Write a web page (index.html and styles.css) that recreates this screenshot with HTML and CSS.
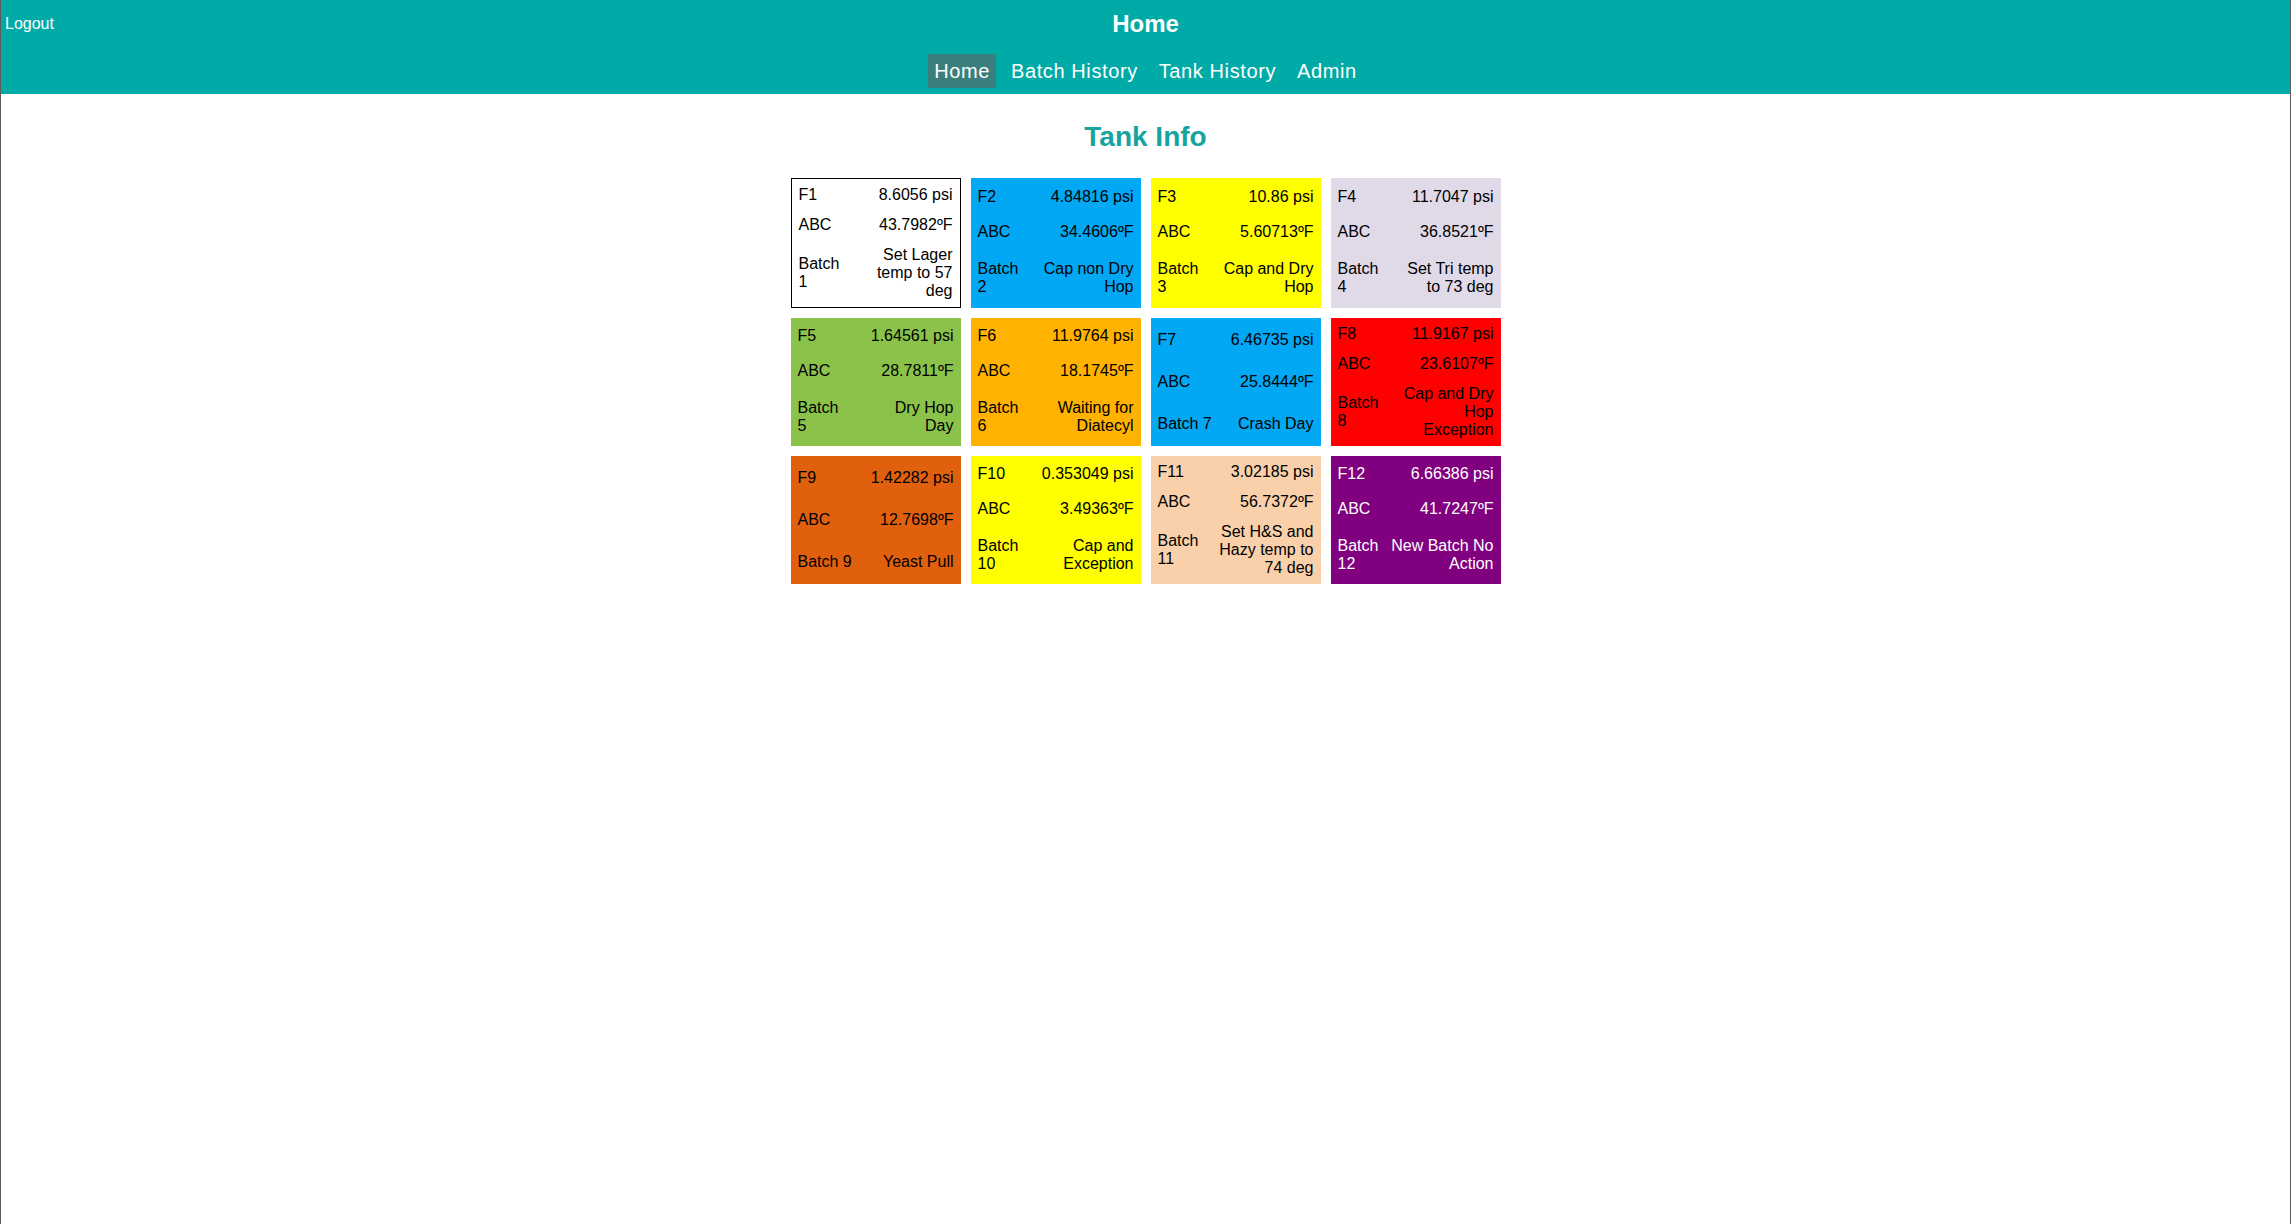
FILE: index.html
```html
<!DOCTYPE html>
<html lang="en">
<head>
<meta charset="utf-8">
<title>Home</title>
<link rel="stylesheet" href="styles.css">
</head>
<body>
<div class="page">
  <header class="topbar">
    <a class="logout" href="#">Logout</a>
    <div class="page-title">Home</div>
    <nav class="nav">
      <a class="nav-item active" href="#">Home</a>
      <a class="nav-item" href="#">Batch History</a>
      <a class="nav-item" href="#">Tank History</a>
      <a class="nav-item" href="#">Admin</a>
    </nav>
  </header>
  <main class="content">
    <h1 class="section-title">Tank Info</h1>
    <div class="tanks">
      <div class="tank t-white"><table class="tank-table"><tr><td>F1</td><td class="val">8.6056 psi</td></tr><tr><td>ABC</td><td class="val">43.7982ºF</td></tr><tr><td>Batch 1</td><td class="val">Set Lager temp to 57 deg</td></tr></table></div>
      <div class="tank t-blue"><table class="tank-table"><tr><td>F2</td><td class="val">4.84816 psi</td></tr><tr><td>ABC</td><td class="val">34.4606ºF</td></tr><tr><td>Batch 2</td><td class="val">Cap non Dry Hop</td></tr></table></div>
      <div class="tank t-yellow"><table class="tank-table"><tr><td>F3</td><td class="val">10.86 psi</td></tr><tr><td>ABC</td><td class="val">5.60713ºF</td></tr><tr><td>Batch 3</td><td class="val">Cap and Dry Hop</td></tr></table></div>
      <div class="tank t-lavender"><table class="tank-table"><tr><td>F4</td><td class="val">11.7047 psi</td></tr><tr><td>ABC</td><td class="val">36.8521ºF</td></tr><tr><td>Batch 4</td><td class="val">Set Tri temp to 73 deg</td></tr></table></div>

      <div class="tank t-green"><table class="tank-table"><tr><td>F5</td><td class="val">1.64561 psi</td></tr><tr><td>ABC</td><td class="val">28.7811ºF</td></tr><tr><td>Batch 5</td><td class="val">Dry Hop Day</td></tr></table></div>
      <div class="tank t-amber"><table class="tank-table"><tr><td>F6</td><td class="val">11.9764 psi</td></tr><tr><td>ABC</td><td class="val">18.1745ºF</td></tr><tr><td>Batch 6</td><td class="val">Waiting for Diatecyl</td></tr></table></div>
      <div class="tank t-blue"><table class="tank-table"><tr><td>F7</td><td class="val">6.46735 psi</td></tr><tr><td>ABC</td><td class="val">25.8444ºF</td></tr><tr><td>Batch 7</td><td class="val">Crash Day</td></tr></table></div>
      <div class="tank t-red"><table class="tank-table"><tr><td>F8</td><td class="val">11.9167 psi</td></tr><tr><td>ABC</td><td class="val">23.6107ºF</td></tr><tr><td>Batch 8</td><td class="val">Cap and Dry Hop Exception</td></tr></table></div>

      <div class="tank t-orange"><table class="tank-table"><tr><td>F9</td><td class="val">1.42282 psi</td></tr><tr><td>ABC</td><td class="val">12.7698ºF</td></tr><tr><td>Batch 9</td><td class="val">Yeast Pull</td></tr></table></div>
      <div class="tank t-yellow"><table class="tank-table"><tr><td>F10</td><td class="val">0.353049 psi</td></tr><tr><td>ABC</td><td class="val">3.49363ºF</td></tr><tr><td>Batch 10</td><td class="val">Cap and Exception</td></tr></table></div>
      <div class="tank t-peach"><table class="tank-table"><tr><td>F11</td><td class="val">3.02185 psi</td></tr><tr><td>ABC</td><td class="val">56.7372ºF</td></tr><tr><td>Batch 11</td><td class="val">Set H&amp;S and Hazy temp to 74 deg</td></tr></table></div>
      <div class="tank t-purple"><table class="tank-table"><tr><td>F12</td><td class="val val-wide">6.66386 psi</td></tr><tr><td>ABC</td><td class="val">41.7247ºF</td></tr><tr><td>Batch 12</td><td class="val">New Batch No Action</td></tr></table></div>
    </div>
  </main>
</div>
</body>
</html>
```

FILE: styles.css
```css
html, body {
  margin: 0;
  padding: 0;
  background: #ffffff;
}

body {
  font-family: "Liberation Sans", Arial, sans-serif;
  font-size: 16px;
  color: #000;
}

.page {
  min-height: 100vh;
  box-sizing: border-box;
  border-left: 1px solid #5c5c5c;
  border-right: 1px solid #5c5c5c;
}

.topbar {
  background: #00aaa6;
  display: grid;
  grid-template-columns: 1fr auto 1fr;
  grid-template-rows: auto auto;
  padding: 10px 0 6px;
}

.logout {
  grid-column: 1;
  grid-row: 1;
  justify-self: start;
  align-self: start;
  margin-top: 5px;
  padding-left: 4px;
  color: #ffffff;
  text-decoration: none;
  font-size: 16px;
  line-height: 18px;
}

.page-title {
  grid-column: 2;
  grid-row: 1;
  color: #ffffff;
  font-weight: bold;
  font-size: 24px;
  line-height: 28px;
  text-align: center;
}

.nav {
  grid-column: 1 / 4;
  grid-row: 2;
  display: flex;
  justify-content: center;
  gap: 9px;
  margin-top: 16px;
}

.nav-item {
  color: #ffffff;
  text-decoration: none;
  font-size: 20px;
  line-height: 24px;
  letter-spacing: 0.6px;
  padding: 5px 6px;
}

.nav-item.active {
  background: #3b7f7c;
}

.content {
  display: flex;
  flex-direction: column;
  align-items: center;
}

.section-title {
  margin: 27px 0 25px;
  color: #17a39f;
  font-size: 28px;
  line-height: 32px;
  font-weight: bold;
}

.tanks {
  display: grid;
  grid-template-columns: repeat(4, 170px);
  column-gap: 10px;
  row-gap: 10px;
}

.tank {
  box-sizing: border-box;
}

.tank-table {
  width: 100%;
  height: 100%;
  border-collapse: separate;
  border-spacing: 2px;
  font-size: 16px;
  line-height: 18px;
  color: inherit;
}

.tank-table td {
  padding: 5px;
  vertical-align: middle;
  text-align: left;
}

.tank-table td.val {
  text-align: right;
}

.tank-table td.val-wide {
  width: 103px;
}

.t-white { background: #ffffff; border: 1px solid #000000; }
.t-blue { background: #02a8f4; }
.t-yellow { background: #ffff00; }
.t-lavender { background: #dfd9e8; }
.t-green { background: #8bc34a; }
.t-amber { background: #ffb300; }
.t-red { background: #ff0000; }
.t-orange { background: #e0600e; }
.t-peach { background: #fad0aa; }
.t-purple { background: #800080; color: #ffffff; }
```
